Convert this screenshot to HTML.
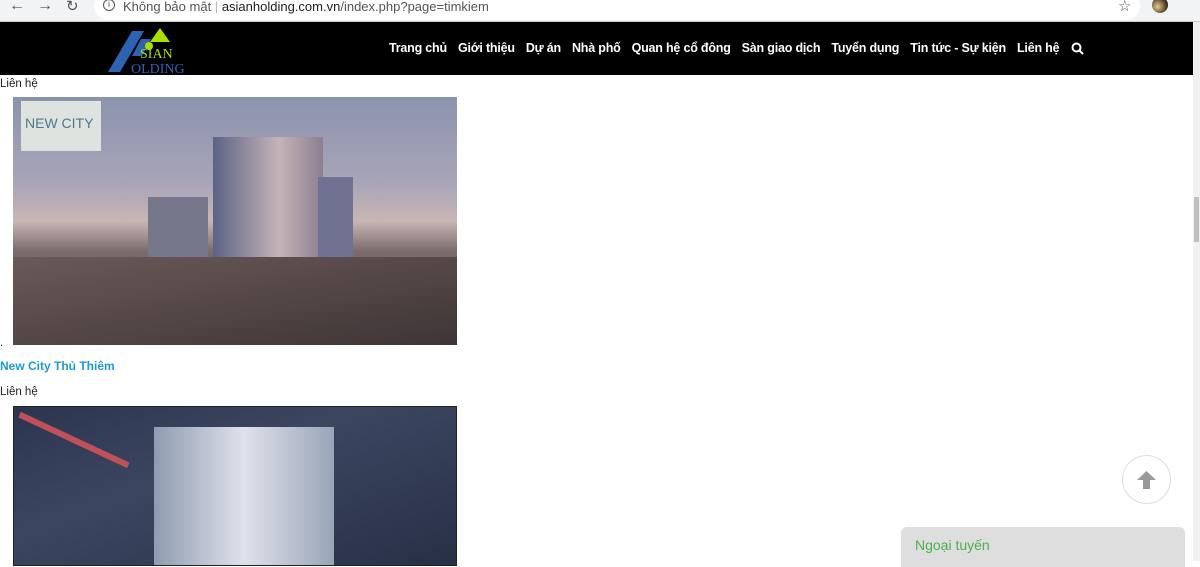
<!DOCTYPE html>
<html><head><meta charset="utf-8">
<style>
*{margin:0;padding:0;box-sizing:border-box}
body{width:1200px;height:561px;overflow:hidden;background:#fff;font-family:"Liberation Sans",sans-serif;position:relative}
.chrome{position:absolute;left:0;top:0;width:1200px;height:22px;background:#f1f3f4;border-bottom:1px solid #ccc}
.addr{position:absolute;left:94px;top:-8px;width:1046px;height:28px;background:#fff;border-radius:14px}
.nav{position:absolute;left:0;top:22px;width:1193px;height:53px;background:#000}
.menu{position:absolute;color:#fff;font-size:12.5px;font-weight:bold;white-space:nowrap;letter-spacing:-0.2px}
.menu span{margin-right:11px}
.sb{position:absolute;left:1193px;top:22px;width:7px;height:539px;background:#f1f1f1}
.t{position:absolute;font-size:11.5px;color:#222}
.img1{position:absolute;left:13px;top:97px;width:444px;height:248px;overflow:hidden;
background:linear-gradient(180deg,#8a93ad 0%,#a9a5b8 35%,#c8b6b4 50%,#7b6d6e 62%,#4d4446 100%)}
.img2{position:absolute;left:13px;top:406px;width:444px;height:160px;border:1px solid #222;overflow:hidden;
background:linear-gradient(160deg,#2b3550 0%,#3c4660 40%,#283046 100%)}
</style></head><body>
<div class="chrome">
 <div class="addr"></div>
 <div style="position:absolute;left:9px;top:-3px;font-size:16px;color:#555">&#8592;</div>
 <div style="position:absolute;left:37px;top:-3px;font-size:16px;color:#555">&#8594;</div>
 <div style="position:absolute;left:66px;top:-3px;font-size:15px;color:#555">&#8635;</div>
 <div style="position:absolute;left:103px;top:-1px;width:12px;height:12px;border:1.3px solid #555;border-radius:50%;font-size:9px;line-height:9px;text-align:center;color:#555">i</div>
 <div style="position:absolute;left:123px;top:-1px;font-size:13px;color:#555;white-space:nowrap">Không bảo mật <span style="color:#bbb">|</span> <span style="color:#222">asianholding.com.vn</span>/index.php?page=timkiem</div>
 <div style="position:absolute;left:1118px;top:-3px;font-size:15px;color:#555">&#9734;</div>
 <div style="position:absolute;left:1152px;top:-3px;width:16px;height:16px;border-radius:50%;background:radial-gradient(circle at 35% 60%,#e6c78a,#3a2a1a 70%)"></div>
</div>
<div class="nav">
 <svg style="position:absolute;left:108px;top:4px" width="82" height="48" viewBox="0 0 82 48">
  <polygon points="0,46 24,5 36,5 12,46" fill="#2e63b3"/>
  <polygon points="24,30 33,13 43,13 34,30" fill="#2e63b3"/>
  <polygon points="42,16 52,2 62,16" fill="#a8e000"/>
  <circle cx="41" cy="20" r="4" fill="#a8e000"/>
  <text x="32" y="32" font-family="Liberation Serif" font-size="14" fill="#a8e000">SIAN</text>
  <text x="23" y="47" font-family="Liberation Serif" font-size="14" fill="#2e63b3">OLDING</text>
 </svg>
 <div class="menu" style="top:19px;left:389px"><span>Trang chủ</span><span>Giới thiệu</span><span>Dự án</span><span>Nhà phố</span><span>Quan hệ cổ đông</span><span>Sàn giao dịch</span><span>Tuyển dụng</span><span>Tin tức - Sự kiện</span><span>Liên hệ</span></div>
 <svg style="position:absolute;left:1071px;top:20px" width="13" height="13" viewBox="0 0 13 13"><circle cx="5.5" cy="5.5" r="4" stroke="#fff" stroke-width="2" fill="none"/><line x1="8.5" y1="8.5" x2="12" y2="12" stroke="#fff" stroke-width="2.2"/></svg>
</div>
<div class="sb"><div style="position:absolute;left:1px;top:175px;width:5px;height:45px;background:#c1c1c1"></div></div>
<div class="t" style="left:0;top:78px">Liên hệ</div>
<div class="img1">
 <div style="position:absolute;left:8px;top:4px;width:80px;height:50px;background:#dfe3e0"></div>
 <div style="position:absolute;left:12px;top:18px;font-size:14px;color:#4a7b8a">NEW CITY</div>
 <div style="position:absolute;left:200px;top:40px;width:110px;height:140px;background:linear-gradient(90deg,#5b6386,#c5b4b8 60%,#8b8090)"></div>
 <div style="position:absolute;left:305px;top:80px;width:35px;height:100px;background:#6d7390"></div>
 <div style="position:absolute;left:135px;top:100px;width:60px;height:70px;background:#77778b"></div>
 <div style="position:absolute;left:0;top:160px;width:444px;height:88px;background:linear-gradient(170deg,#6a5a58,#3e3536)"></div>
</div>
<div class="t" style="left:0;top:337px">.</div>
<div style="position:absolute;left:0;top:359px;font-size:12px;font-weight:bold;color:#1a9bd7">New City Thủ Thiêm</div>
<div class="t" style="left:0;top:386px">Liên hệ</div>
<div class="img2">
 <div style="position:absolute;left:140px;top:20px;width:180px;height:140px;background:linear-gradient(90deg,#8f9bb0,#dfe2ea 50%,#9aa4b8)"></div>
 <div style="position:absolute;left:0;top:30px;width:120px;height:6px;background:#c0505a;transform:rotate(25deg)"></div>
</div>
<div style="position:absolute;left:1122px;top:455px;width:49px;height:49px;border-radius:50%;border:1px solid #ddd;background:#fff"></div>
<svg style="position:absolute;left:1137px;top:471px" width="19" height="18" viewBox="0 0 19 18"><polygon points="9.5,0 19,9 13,9 13,18 6,18 6,9 0,9" fill="#999"/></svg>
<div style="position:absolute;left:901px;top:527px;width:284px;height:40px;background:#dedede;border-radius:6px 6px 0 0"></div>
<div style="position:absolute;left:915px;top:537px;font-size:14px;color:#4caf50">Ngoại tuyến</div>
</body></html>
